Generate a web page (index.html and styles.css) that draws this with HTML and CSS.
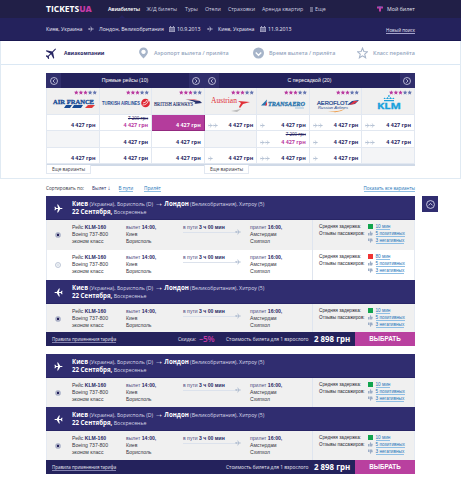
FILE: index.html
```html
<!DOCTYPE html>
<html lang="ru">
<head>
<meta charset="utf-8">
<title>TicketsUA</title>
<link rel="stylesheet" href="styles.css">
</head>
<body>
<svg class="defs" width="0" height="0">
  <symbol id="plane" viewBox="0 0 20 20"><path d="M1 6l2 0 2 3h4L7 1h2l5 8h4q2 1 0 2h-4l-5 8H7l2-8H5l-2 3H1l1-4z"/></symbol>
  <symbol id="thin" viewBox="0 0 20 20"><path d="M1 10h18M3 7l2 3-2 3M9 2l4 8-4 8" fill="none" stroke="currentColor" stroke-width="2.4"/></symbol>
  <symbol id="cal" viewBox="0 0 12 12"><path d="M0 2h2V0h2v2h4V0h2v2h2v10H0z" opacity=".75"/><path d="M1 5h10M1 8h10M4 5v6M8 5v6" stroke="#24225c" stroke-width=".7"/></symbol>
  <symbol id="left" viewBox="0 0 16 16"><g fill="none" stroke="currentColor" stroke-width="1.6"><circle cx="8" cy="8" r="7"/><path d="M9.500 4.500L6 8l3.500 3.500"/></g></symbol>
  <symbol id="thumb" viewBox="0 0 12 12"><path d="M0 5h3v6H0zM4 5l2-5q2 0 1.500 4H11q1 1 0 3l-1 4H4z"/></symbol>
  <symbol id="star" viewBox="0 0 20 20"><path d="M10 0l3 7h7l-5.500 5 2 8-6.500-5-6.500 5 2-8L0 7h7z"/></symbol>
  <symbol id="stars" viewBox="0 0 100 20"><g fill="#b9399f"><use href="#star" width="20" height="20"/><use href="#star" x="20" width="20" height="20"/><use href="#star" x="40" width="20" height="20"/></g><g fill="#6576b0"><use href="#star" x="60" width="20" height="20"/><use href="#star" x="80" width="20" height="20"/></g></symbol>
</svg>

<header class="top">
  <div class="logo">TICKETS<b>UA</b></div>
  <nav class="menu">
    <a class="current">Авиабилеты</a><a>Ж/Д билеты</a><a>Туры</a><a>Отели</a><a>Страховки</a><a>Аренда квартир</a><a class="extra"><svg viewBox="0 0 10 14"><path d="M0 1h10M0 5h10M0 9h10M0 13h10" stroke="currentColor" stroke-width="1.800"/></svg>Еще</a>
  </nav>
  <div class="ticket"><svg viewBox="0 0 12 12"><path d="M0 1h12v4H8v6H4V5H0z" fill="#c43aa6"/><path d="M3 1h6v2H3z" fill="#4d7bc5"/></svg><span>Мой билет</span></div>
</header>

<section class="route">
  <span class="c1">Киев, Украина</span><svg><use href="#thin"/></svg><span class="c2">Лондон, Великобритания</span><svg><use href="#cal"/></svg><span class="date">10.9.2013</span>
  <svg><use href="#thin"/></svg><span class="c1">Киев, Украина</span><svg><use href="#cal"/></svg><span class="date">11.9.2013</span>
  <a class="again">Новый поиск</a>
</section>

<main class="panel">
  <nav class="tabs">
    <a class="on"><svg viewBox="0 0 20 20"><g transform="rotate(-45 10 10)"><path d="M-2 6l2 0 2 3h6L5 0h2l6 9h7q2 1 0 2h-7l-6 9H5l3-9H2l-2 3h-2l1-4z"/></g></svg><span>Авиакомпании</span></a>
    <a><svg viewBox="0 0 20 20"><path fill-rule="evenodd" d="M10 20Q2 12 2 8a8 8 0 0 1 16 0q0 4-8 12zM10 4a4 4 0 1 0 .01 0z"/></svg><span>Аэропорт вылета / прилёта</span></a>
    <a><svg viewBox="0 0 20 20"><circle cx="10" cy="10" r="10"/><path d="M5 9l5 5 5-5" fill="none" stroke="#fff" stroke-width="2.500"/></svg><span>Время вылета / прилёта</span></a>
    <a><svg viewBox="0 0 20 20"><path d="M10 1l2.500 6.300 6.500.4-5 4.300 1.700 6.600L10 15l-5.700 3.600L6 12 1 7.700l6.500-.4z" fill="none" stroke="currentColor" stroke-width="1.900"/></svg><span>Класс перелёта</span></a>
  </nav>

  <div class="matrix">
    <div class="groups">
      <div class="group direct"><i><svg><use href="#left"/></svg></i><span>Прямые рейсы (10)</span><i class="flip"><svg><use href="#left"/></svg></i></div>
      <div class="group change"><i><svg><use href="#left"/></svg></i><span>С пересадкой (20)</span><i class="flip"><svg><use href="#left"/></svg></i></div>
    </div>
    <div class="cells">
      <div class="air"><svg class="stars"><use href="#stars"/></svg><svg class="brand" viewBox="0 0 52 20"><text x="6" y="8.500" textLength="41" lengthAdjust="spacingAndGlyphs" class="af">AIR FRANCE</text><path d="M17 13l2-3h6l-2 3zM25 13l2-3h9l-2 3z" fill="#174a94"/><path d="M38 13l3-3h7l-3 3z" fill="#e03a3a"/></svg></div>
      <div class="air"><svg class="stars"><use href="#stars"/></svg><svg class="brand" viewBox="0 0 52 20"><text x="2" y="10" textLength="38" lengthAdjust="spacingAndGlyphs" class="tk">TURKISH AIRLINES</text><circle cx="45.500" cy="8" r="4.300" fill="#df2632"/><path d="M42.500 10q5 0 6-5M43 8q3 0 4-3" fill="none" stroke="#fff" stroke-width=".8"/></svg></div>
      <div class="air"><svg class="stars"><use href="#stars"/></svg><svg class="brand" viewBox="0 0 52 20"><text x="2" y="10.500" textLength="39" lengthAdjust="spacingAndGlyphs" class="ba">BRITISH AIRWAYS</text><path d="M33 4.500q8 0 15 1.500l2 2-8 1q5-2-9-4.500z" fill="#29326d"/><path d="M34 4q8-.5 14 1.500L42 5z" fill="#e23a4c"/></svg></div>
      <div class="air"><svg class="stars"><use href="#stars"/></svg><svg class="brand" viewBox="0 0 52 20"><text x="6" y="8" textLength="26" lengthAdjust="spacingAndGlyphs" class="os">Austrian</text><path d="M33 6l12 1-7 2-3 4-1-1 2-4z" fill="#e02f37"/><path d="M26 16l10-2-4 3z" fill="#bbb"/></svg></div>
      <div class="air"><svg class="stars"><use href="#stars"/></svg><svg class="brand" viewBox="0 0 52 20"><text x="11" y="10.500" textLength="37" lengthAdjust="spacingAndGlyphs" class="ta">TRANSAERO</text><path d="M4 10.500l6-6-1 6z" fill="#2874ad"/><path d="M8 10.500l2-4v4z" fill="#e34"/><path d="M38 13h9" stroke="#9bc3df"/></svg></div>
      <div class="air"><svg class="stars"><use href="#stars"/></svg><svg class="brand" viewBox="0 0 52 20"><text x="7" y="10" textLength="31" lengthAdjust="spacingAndGlyphs" class="su">AEROFLOT</text><path d="M37 10l5-4 7-1-4 4z" fill="#21458c"/><path d="M39 10l5-4 4 0-4 3z" fill="#dd3445"/><text x="8" y="13.800" textLength="30" lengthAdjust="spacingAndGlyphs" class="ru">Russian Airlines</text><path d="M18 16q9 1.500 17-2-7 5-17 2z" fill="#ee963d"/></svg></div>
      <div class="air"><svg class="stars"><use href="#stars"/></svg><svg class="brand" viewBox="0 0 52 20"><text x="15" y="14" textLength="24" lengthAdjust="spacingAndGlyphs" class="kl">KLM</text><path d="M22 6.300h10V5H22zM21.500 4l1-1.500L24 4l1.500-2L27 4l1.500-2L30 4l1.500-1.500 1 1.500z" fill="#1ba1dc"/><path d="M26.300 0h1.200v2h-1.200z" fill="#1ba1dc"/></svg></div>

      <div class="fare">4 427 грн</div>
      <div class="fare sale"><s>7 200 грн</s>4 427 грн</div>
      <div class="fare picked">4 427 грн</div>
      <div class="fare"><em><svg><use href="#thin"/></svg><svg><use href="#thin"/></svg></em>4 427 грн</div>
      <div class="fare"><em><svg><use href="#thin"/></svg></em>4 427 грн</div>
      <div class="fare"><em><svg><use href="#thin"/></svg><svg><use href="#thin"/></svg></em>4 427 грн</div>
      <div class="fare"><em><svg><use href="#thin"/></svg><svg><use href="#thin"/></svg></em>4 427 грн</div>

      <div class="fare none"></div>
      <div class="fare">4 427 грн</div>
      <div class="fare">4 427 грн</div>
      <div class="fare none"></div>
      <div class="fare sale"><em><svg><use href="#thin"/></svg><svg><use href="#thin"/></svg></em><s>7 200 грн</s>4 427 грн</div>
      <div class="fare"><em><svg><use href="#thin"/></svg></em>4 427 грн</div>
      <div class="fare"><em><svg><use href="#thin"/></svg><svg><use href="#thin"/></svg></em>4 427 грн</div>

      <div class="fare">4 427 грн</div>
      <div class="fare">4 427 грн</div>
      <div class="fare">4 427 грн</div>
      <div class="fare"><em><svg><use href="#thin"/></svg></em>4 427 грн</div>
      <div class="fare"><em><svg><use href="#thin"/></svg><svg><use href="#thin"/></svg></em>4 427 грн</div>
      <div class="fare"><em><svg><use href="#thin"/></svg></em>4 427 грн</div>
      <div class="fare none"></div>
    </div>
    <div class="more"><a>Еще варианты</a><a>Еще варианты</a></div>
  </div>
</main>

<div class="sort">
  <span class="by">Сортировать по:</span><b>Вылет <u>↓</u></b><span class="s1"><a>В пути</a></span><span><a>Прилёт</a></span><a class="all">Показать все варианты</a>
</div>

<div class="results">
  <div class="list">
    <article class="card first">
      <header class="leg"><svg><use href="#plane"/></svg><div><p><b>Киев</b> (Украина), Борисполь (D) <u>→</u> <b>Лондон</b> (Великобритания), Хитроу (5)</p><p><b>22 Сентября,</b> Воскресенье</p></div></header>
      <div class="flight"><i class="radio"></i><div class="no"><p>Рейс <b>KLM-160</b></p><p>Boeing 737-800</p><p>эконом класс</p></div><div class="dep"><p>вылет <b>14:00,</b></p><p>Киев</p><p>Борисполь</p></div><div class="dur"><p>в пути <b>3 ч 00 мин</b></p></div><svg class="to"><use href="#thin"/></svg><div class="arr"><p>прилет <b>16:00,</b></p><p>Амстердам</p><p>Схипхол</p></div><div class="info"><p>Средняя задержка:</p><p>Отзывы пассажиров:</p></div><div class="rate"><p><i></i><a>10 мин</a></p><p><svg><use href="#thumb"/></svg><a>5 позитивных</a></p><p><svg class="down"><use href="#thumb"/></svg><a>3 негативных</a></p></div></div>
      <div class="flight other"><i class="radio"></i><div class="no"><p>Рейс <b>KLM-160</b></p><p>Boeing 737-800</p><p>эконом класс</p></div><div class="dep"><p>вылет <b>14:00,</b></p><p>Киев</p><p>Борисполь</p></div><div class="dur"><p>в пути <b>3 ч 00 мин</b></p></div><svg class="to"><use href="#thin"/></svg><div class="arr"><p>прилет <b>16:00,</b></p><p>Амстердам</p><p>Схипхол</p></div><div class="info"><p>Средняя задержка:</p><p>Отзывы пассажиров:</p></div><div class="rate"><p><i></i><a>80 мин</a></p><p><svg><use href="#thumb"/></svg><a>5 позитивных</a></p><p><svg class="down"><use href="#thumb"/></svg><a>3 негативных</a></p></div></div>
      <header class="leg back"><svg><use href="#plane"/></svg><div><p><b>Киев</b> (Украина), Борисполь (D) <u>→</u> <b>Лондон</b> (Великобритания), Хитроу (5)</p><p><b>22 Сентября,</b> Воскресенье</p></div></header>
      <div class="flight short"><i class="radio"></i><div class="no"><p>Рейс <b>KLM-160</b></p><p>Boeing 737-800</p><p>эконом класс</p></div><div class="dep"><p>вылет <b>14:00,</b></p><p>Киев</p><p>Борисполь</p></div><div class="dur"><p>в пути <b>3 ч 00 мин</b></p></div><svg class="to"><use href="#thin"/></svg><div class="arr"><p>прилет <b>16:00,</b></p><p>Амстердам</p><p>Схипхол</p></div><div class="info"><p>Средняя задержка:</p><p>Отзывы пассажиров:</p></div><div class="rate"><p><i></i><a>10 мин</a></p><p><svg><use href="#thumb"/></svg><a>5 позитивных</a></p><p><svg class="down"><use href="#thumb"/></svg><a>3 негативных</a></p></div></div>
      <footer><a class="rules">Правила применения тарифа</a><span class="off">Скидка: <b>–5%</b></span><span class="cost">Стоимость билета для 1 взрослого</span><strong>2 898 грн</strong><button>ВЫБРАТЬ</button></footer>
    </article>

    <article class="card">
      <header class="leg"><svg><use href="#plane"/></svg><div><p><b>Киев</b> (Украина), Борисполь (D) <u>→</u> <b>Лондон</b> (Великобритания), Хитроу (5)</p><p><b>22 Сентября,</b> Воскресенье</p></div></header>
      <div class="flight"><i class="radio"></i><div class="no"><p>Рейс <b>KLM-160</b></p><p>Boeing 737-800</p><p>эконом класс</p></div><div class="dep"><p>вылет <b>14:00,</b></p><p>Киев</p><p>Борисполь</p></div><div class="dur"><p>в пути <b>3 ч 00 мин</b></p></div><svg class="to"><use href="#thin"/></svg><div class="arr"><p>прилет <b>16:00,</b></p><p>Амстердам</p><p>Схипхол</p></div><div class="info"><p>Средняя задержка:</p><p>Отзывы пассажиров:</p></div><div class="rate"><p><i></i><a>10 мин</a></p><p><svg><use href="#thumb"/></svg><a>5 позитивных</a></p><p><svg class="down"><use href="#thumb"/></svg><a>3 негативных</a></p></div></div>
      <header class="leg back"><svg><use href="#plane"/></svg><div><p><b>Киев</b> (Украина), Борисполь (D) <u>→</u> <b>Лондон</b> (Великобритания), Хитроу (5)</p><p><b>22 Сентября,</b> Воскресенье</p></div></header>
      <div class="flight"><i class="radio"></i><div class="no"><p>Рейс <b>KLM-160</b></p><p>Boeing 737-800</p><p>эконом класс</p></div><div class="dep"><p>вылет <b>14:00,</b></p><p>Киев</p><p>Борисполь</p></div><div class="dur"><p>в пути <b>3 ч 00 мин</b></p></div><svg class="to"><use href="#thin"/></svg><div class="arr"><p>прилет <b>16:00,</b></p><p>Амстердам</p><p>Схипхол</p></div><div class="info"><p>Средняя задержка:</p><p>Отзывы пассажиров:</p></div><div class="rate"><p><i></i><a>10 мин</a></p><p><svg><use href="#thumb"/></svg><a>5 позитивных</a></p><p><svg class="down"><use href="#thumb"/></svg><a>3 негативных</a></p></div></div>
      <footer><a class="rules">Правила применения тарифа</a><span class="off"></span><span class="cost">Стоимость билета для 1 взрослого</span><strong>2 898 грн</strong><button>ВЫБРАТЬ</button></footer>
    </article>
  </div>
  <a class="up"><svg><use href="#left"/></svg></a>
</div>
</body>
</html>
```

FILE: styles.css
```css
* { box-sizing: border-box; }
body { margin: 0; width: 461px; height: 500px; overflow: hidden; background: #fff; color: #36363e; font: 5.100px/7px "Liberation Sans", Arial, sans-serif; white-space: nowrap; }
p { margin: 0; }
svg { display: block; fill: currentColor; flex: none; }
u { text-decoration: none; font-family: "Liberation Sans", sans-serif; line-height: 0; }
.defs { position: absolute; }

.top { height: 18px; padding: 0 46px; background: #211f47; color: #d0cfe0; display: flex; align-items: center; font: 5.300px/18px "Open Sans", "Liberation Sans", sans-serif; }
.logo { width: 62px; color: #fff; font-size: 8.500px; font-weight: 700; }
.logo b { color: #c43aa6; }
.menu { display: grid; grid-template-columns: 38.500px 38.500px 20px 23px 34px 48px 20px; flex: 1; }
.menu a { position: relative; }
.menu .extra { display: flex; align-items: center; gap: 2px; }
.extra svg { width: 3px; height: 5px; }
.menu .current { color: #fff; font-weight: 600; letter-spacing: -.15px; }
.current::after { content: ""; position: absolute; left: 11px; bottom: 0; border: solid transparent; border-width: 0 3px 3px; border-bottom-color: #24225c; }
.ticket { width: 38px; display: flex; align-items: center; gap: 4px; color: #e3e2ef; }
.ticket svg { width: 6px; height: 6px; }

.route { height: 23px; padding: 0 46px; background: #24225c; border-bottom: 1px solid #191750; color: #ecebf7; display: flex; align-items: center; font: 5.200px/22px "Open Sans", sans-serif; }
.route svg { width: 6px; height: 6px; color: #c7c7dd; margin-right: 5px; }
.route .c1 { width: 42px; }
.route .c2 { width: 70px; }
.route .date { width: 29px; margin-left: -3px; margin-right: 1px; }
.again { margin-left: auto; font: 4.500px/6px "Open Sans", sans-serif; border-bottom: 1px solid #a5a4cc; margin-top: 3px; }

.panel { height: 138px; border: solid #e0eaf3; border-width: 0 1px 1px; }
.tabs { height: 24px; padding: 0 45px; border-bottom: 1px solid #dbe8f4; display: grid; grid-template-columns: 92px 115px 104px 58px; align-items: center; font: 600 5.400px/10px "Open Sans", sans-serif; color: #94a5be; }
.tabs a { display: flex; align-items: center; gap: 5px; }
.tabs svg { width: 11px; height: 12px; color: #a6b4c9; }
.tabs .on { color: #282663; font-size: 5px; font-weight: 700; gap: 7px; }
.tabs .on svg { color: #282663; }

.matrix { margin: 8px 45px 0; }
.groups { display: flex; height: 15px; background: #24225c; color: #fff; font: 5.200px/15px "Liberation Sans", sans-serif; }
.group { display: flex; text-align: center; }
.direct { width: 158px; }
.change { flex: 1; }
.group span { flex: 1; }
.group i { width: 15px; background: #302e6b; display: grid; place-items: center; color: #d7d7ea; }
.group svg { width: 8px; height: 8px; }
.flip { transform: scaleX(-1); }
.cells { display: grid; grid-template-columns: repeat(7, 1fr); grid-template-rows: 27px 16px 17px 16px; border-left: 1px solid #e2e8f1; border-bottom: 2px solid #cfd9e7; height: 78px; }
.cells > div { border-right: 1px solid #e2e8f1; border-bottom: 1px solid #e2e8f1; min-width: 0; }
.air { background: #f0f0f0; display: flex; flex-direction: column; }
.stars { width: 23px; height: 5px; margin: 2px 2px 0 auto; }
.brand { width: 52px; height: 20px; }
.af { font: 700 6.500px "Liberation Serif", serif; fill: #174a94; stroke: #174a94; stroke-width: .3px; }
.tk { font: 700 5px "Liberation Sans", sans-serif; fill: #284a92; }
.ba { font: 5.800px "Liberation Serif", serif; fill: #29326d; stroke: #29326d; stroke-width: .15px; }
.os { font: 8.500px "Liberation Serif", serif; fill: #e02f37; }
.ta { font: italic 700 7px "Liberation Serif", serif; fill: #2874ad; stroke: #2874ad; stroke-width: .3px; }
.su { font: 5.800px "Liberation Sans", sans-serif; fill: #21458c; stroke: #21458c; stroke-width: .2px; }
.ru { font: italic 3.200px "Liberation Sans", sans-serif; fill: #21458c; }
.kl { font: 700 9px "Open Sans", sans-serif; fill: #1ba1dc; stroke: #1ba1dc; stroke-width: .3px; }
.fare { display: flex; align-items: flex-end; justify-content: flex-end; padding: 0 3px .5px; font: 700 5.400px/9px "Open Sans", sans-serif; color: #282663; position: relative; }
.fare em { display: flex; gap: 0; margin: 0 auto 2px 0; color: #9cadc6; }
.fare em svg { width: 5px; height: 5px; }
.sale { color: #b9399f; }
.fare s { position: absolute; right: 3px; top: 0; font-size: 4.500px; font-weight: 400; line-height: 6px; color: #282663; }
.cells .picked { background: #b43c9c; color: #fff; border-color: #93297f; }
.none { background: #f4f5f7; }
.more { display: grid; grid-template-columns: 158px 45px; }
.more a { width: 45px; height: 9px; margin-top: -1px; background: #fff; border: 1px solid #e2e8f1; border-top: 0; text-align: center; font: 4.700px/9px "Open Sans", sans-serif; }

.sort { display: flex; align-items: center; height: 17px; padding: 1px 46px 0; font: 4.700px/6px "Open Sans", "Liberation Sans", sans-serif; }
.by { width: 46px; }
.sort b { width: 26.500px; font-weight: 400; color: #282663; }
.sort u { font-size: 6px; }
.s1 { width: 25.500px; }
.sort a, .rate a { color: #2475b8; border-bottom: 1px solid #8fbfe5; }
.sort .all { margin-left: auto; font-size: 4.500px; }

.results { display: flex; gap: 7px; margin-left: 46px; align-items: flex-start; }
.list { width: 369px; }
.card { margin-bottom: 8px; }
.leg { display: flex; height: 24px; background: #302d70; border-bottom: 1px solid #282565; color: #d9d8e8; font: 5.250px/8px "Open Sans", "Liberation Sans", sans-serif; padding-top: 3.500px; }
.leg svg { width: 9px; height: 9px; margin: 4px 9px 0 8px; color: #fff; }
.leg b { color: #fff; font-size: 6.150px; }
.leg u { font-size: 8.500px; color: #fff; }
.back svg { transform: scaleX(-1); }
.flight { display: grid; grid-template-columns: 25px 54px 57px 52px 15px 62px 56px 46px; height: 30px; background: #f0f0f0; border: 1px solid #e5eaf2; border-width: 0 1px; padding-top: 4px; }
.other { background: #fff; }
.short { height: 28px; }
.card:not(.first) .flight { height: 29px; }
.flight b { color: #282663; }
.dep p:first-child, .arr p:first-child, .dur { color: #4d4a80; }
.radio { width: 6px; height: 6px; border-radius: 50%; border: 1px solid #c1c9d9; background: #24225c; margin: 8px 0 0 8px; box-shadow: inset 0 0 0 .6px #fff; }
.other .radio { background: #dfe5ec; }
.dur p { border-bottom: 1px solid #dce2ec; height: 9px; }
.to { width: 6px; height: 6px; margin-top: 5px; color: #9cadc6; }
.info { border-left: 1px solid #dfe5ef; padding-left: 6px; margin: -4px 0 0; padding-top: 3px; color: #282831; font-size: 4.700px; }
.rate { margin-top: -1px; font-size: 4.700px; }
.rate p { display: flex; align-items: center; height: 7px; gap: 2.500px; }
.rate i { width: 5px; height: 5px; background: #11a44d; }
.rate svg { width: 5px; height: 5px; color: #9cadc6; }
.rate a { line-height: 5px; }
.other .rate i { background: #ef3434; }
.down { transform: scaleY(-1); }
footer { height: 14px; background: #24225c; color: #e6e5f1; display: grid; grid-template-columns: 126px 48px 88px 41px 60px; align-items: center; padding-left: 6px; font: 4.900px/6px "Open Sans", sans-serif; }
.rules { justify-self: start; border-bottom: 1px solid #8482b0; font-size: 4.450px; }
.off { display: flex; align-items: center; gap: 3px; }
.off b { color: #c43aa6; font-size: 8.200px; font-weight: 600; letter-spacing: -.2px; }
footer strong { font-size: 7.900px; color: #fff; }
button { width: 60px; height: 14px; border: 0; padding: 0; background: #b9409f; color: #fff; font: 700 6.300px/14px "Liberation Sans", sans-serif; }
.up { width: 16px; height: 16px; background: #302d70; color: #d7d7ea; display: grid; place-items: center; }
.up svg { width: 9px; height: 9px; transform: rotate(90deg); }
```
